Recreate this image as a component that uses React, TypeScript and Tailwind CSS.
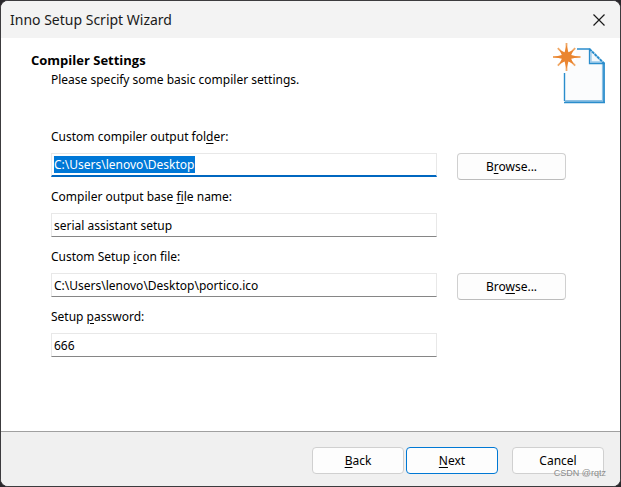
import { useEffect, useRef } from "react";
import type { ReactNode } from "react";
import clsx from "clsx";

const buttonBase =
  "h-[27px] rounded border bg-[#fdfdfd] text-black leading-4 text-center outline-none";

// Underlined mnemonic letter, like in native dialogs
function Key({ children }: { children: ReactNode }) {
  return <span className="underline underline-offset-2">{children}</span>;
}

function NewFileIcon() {
  return (
    <svg width="54" height="62" viewBox="0 0 54 62" fill="none" aria-hidden="true">
      <path d="M12 31V61H53V22L38 7H24V18L12 31Z" fill="#fbfcfd" />
      <path d="M25 7H38" stroke="#2a8dcc" strokeWidth="1.6" />
      <path d="M12.5 31V59" stroke="#2a8dcc" strokeWidth="1.4" />
      <path d="M13 59H51" stroke="#8cc0e3" strokeWidth="2" />
      <path d="M12 60.5H53" stroke="#2a8dcc" strokeWidth="1.4" />
      <path d="M50.5 22V59" stroke="#8cc0e3" strokeWidth="1.2" />
      <path d="M52 21V61" stroke="#2a8dcc" strokeWidth="1.8" />
      <path d="M38 8V21.5H51Z" fill="#f3f8fc" />
      <path d="M39 9V20H50" stroke="#9ccaea" strokeWidth="1.4" />
      <path d="M37.5 6.8V21.5H52.5" stroke="#2a8dcc" strokeWidth="1.3" />
      <path d="M37.5 7L52.5 21.8" stroke="#2a8dcc" strokeWidth="2" strokeDasharray="3 0.6" />
      <path
        d="M14.5 1V29M1 15H28.5M5.8 6.2L23.2 23.6M23.2 6.2L5.8 23.6"
        stroke="#f0a765"
        strokeWidth="1.8"
      />
      <path
        d="M14.5 3L16.4 10.2L21.5 8L19.2 13L27 15L19.2 16.8L21.5 22L16.4 19.6L14.5 27L12.6 19.6L7.5 22L9.8 16.8L2 15L9.8 13L7.5 8L12.6 10.2Z"
        fill="#ea8530"
      />
    </svg>
  );
}

type FieldProps = {
  id: string;
  label: ReactNode;
  value: string;
  active?: boolean;
  browse?: ReactNode;
};

function Field({ id, label, value, active, browse }: FieldProps) {
  const inputRef = useRef<HTMLInputElement>(null);

  useEffect(() => {
    if (active) {
      inputRef.current?.focus();
      inputRef.current?.select();
    }
  }, [active]);

  return (
    <div className="flex h-[60px] flex-col">
      <label htmlFor={id} className="mb-2 h-4 self-start leading-4">
        {label}
      </label>
      <div className="flex items-start gap-5">
        <input
          id={id}
          ref={inputRef}
          type="text"
          defaultValue={value}
          className={clsx(
            "h-6 min-w-0 flex-1 border border-[#e8e8e8] bg-white px-[2px] leading-4 outline-none selection:bg-[#0078d7] selection:text-white",
            active ? "border-b-2 border-b-[#0067c0]" : "border-b-[#868686]"
          )}
        />
        {browse ? (
          <button type="button" className={clsx(buttonBase, "w-[109px] border-[#d0d0d0] border-b-[#bcbcbc]")}>
            {browse}
          </button>
        ) : (
          <div className="w-[109px]" />
        )}
      </div>
    </div>
  );
}

export default function App() {
  return (
    <div className="flex min-h-screen flex-col bg-[#29272b] font-['Noto_Sans',sans-serif] text-[12px] text-black">
      <div className="relative flex flex-1 flex-col overflow-hidden rounded-lg border border-[#3c3b3e] bg-white">
        <header className="flex h-[37px] items-center justify-between bg-[#f3f3f3] pr-[13px] pl-[9px]">
          <h1 className="text-[14px] leading-5 text-[#1a1a1a]">Inno Setup Script Wizard</h1>
          <button type="button" aria-label="Close" className="flex size-4 items-center justify-center">
            <svg width="12" height="12" viewBox="0 0 12 12" aria-hidden="true">
              <path d="M0.5 0.5L11.5 11.5M11.5 0.5L0.5 11.5" stroke="#1a1a1a" strokeWidth="1.2" />
            </svg>
          </button>
        </header>

        <div className="flex items-start justify-between pt-1 pr-[14px] pl-[30px]">
          <div className="pt-2">
            <h2 className="font-['Open_Sans',sans-serif] text-[13px] leading-5 font-bold">Compiler Settings</h2>
            <p className="pl-5 leading-5">Please specify some basic compiler settings.</p>
          </div>
          <NewFileIcon />
        </div>

        <main className="flex-1 pt-[25px] pr-[54px] pl-[50px]">
          <Field
            id="output-folder"
            label={<>Custom compiler output fol<Key>d</Key>er:</>}
            value="C:\Users\lenovo\Desktop"
            active
            browse={<>B<Key>r</Key>owse...</>}
          />
          <Field
            id="base-name"
            label={<>Compiler output base <Key>f</Key>ile name:</>}
            value="serial assistant setup"
          />
          <Field
            id="icon-file"
            label={<>Custom Setup <Key>i</Key>con file:</>}
            value="C:\Users\lenovo\Desktop\portico.ico"
            browse={<>Bro<Key>w</Key>se...</>}
          />
          <Field id="password" label={<>Setup <Key>p</Key>assword:</>} value="666" />
        </main>

        <footer className="flex h-[55px] justify-end border-t border-[#a0a0a0] bg-[#f0f0f0] pt-[15px] pr-4">
          <button type="button" className={clsx(buttonBase, "mr-[2px] w-[92px] border-[#d0d0d0]")}>
            <Key>B</Key>ack
          </button>
          <button type="button" className={clsx(buttonBase, "mr-[14px] w-[92px] border-[#0078d4]")}>
            <Key>N</Key>ext
          </button>
          <button type="button" className={clsx(buttonBase, "w-[92px] border-[#d0d0d0]")}>
            Cancel
          </button>
        </footer>

        <span className="pointer-events-none absolute right-[14px] bottom-[7px] font-['Liberation_Sans',sans-serif] text-[9px] leading-3 text-[#8c8c8c]">
          CSDN @rqtz
        </span>
      </div>
    </div>
  );
}
